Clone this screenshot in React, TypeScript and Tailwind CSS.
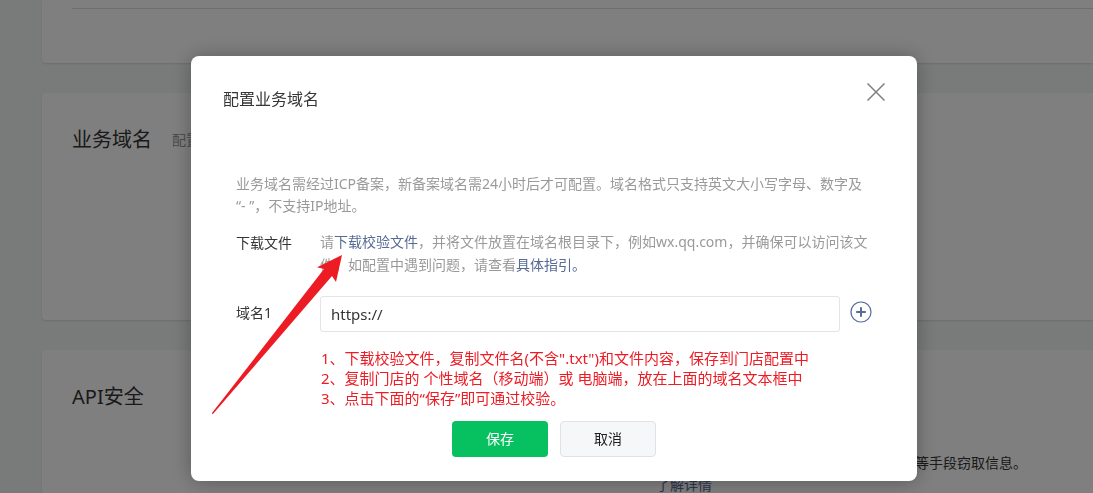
import { useState } from "react";

function Card({ children, className }: { children?: React.ReactNode; className: string }) {
  return (
    <section className={`bg-white pl-[30px] shadow-[0_1px_2px_rgba(0,0,0,0.12)] ${className}`}>
      {children}
    </section>
  );
}

function SettingsPage() {
  return (
    <div className="flex h-screen flex-col gap-[30px] overflow-hidden bg-[#f3f7f5] pl-[42px]">
      <Card className="h-[63px] shrink-0 rounded-bl pt-[8px]">
        <hr className="border-t border-[#dcdcdc]" />
      </Card>

      <Card className="flex h-[227px] shrink-0 items-start gap-5 rounded-l pt-8">
        <h2 className="text-[20px] leading-[30px] text-[#353535]">业务域名</h2>
        <p className="pt-1 text-sm leading-[22px] text-[#9a9a9a]">配置</p>
      </Card>

      <Card className="shrink-0 rounded-l pt-8">
        <h2 className="text-[20px] leading-[30px] text-[#353535]">API安全</h2>
        <div className="mt-10 pl-[584px] text-sm leading-[22px]">
          <p className="pl-[259px] text-[#353535]">等手段窃取信息。</p>
          <a href="#" className="text-[#576b95]">了解详情</a>
        </div>
      </Card>
    </div>
  );
}

function DomainDialog() {
  const [domain, setDomain] = useState<string>("https://");

  return (
    <div
      role="dialog"
      aria-labelledby="dialog-title"
      className="relative w-[726px] rounded-lg bg-white pb-6 pt-[27px] shadow-[0_1px_20px_rgba(0,0,0,0.3)]"
    >
      <div className="flex items-start justify-between px-8">
        <h3 id="dialog-title" className="mt-1 text-base leading-6 text-[#353535]">配置业务域名</h3>
        <button type="button" aria-label="关闭" className="text-[#808080]">
          <svg width="18" height="18" viewBox="0 0 18 18" fill="none" stroke="currentColor" strokeWidth="1.5">
            <path d="M0.5 0.5L17.5 17.5M17.5 0.5L0.5 17.5" />
          </svg>
        </button>
      </div>

      <div className="mt-[62px] px-[45px] text-sm text-[#9a9a9a]">
        <p className="leading-[22px]">
          业务域名需经过ICP备案，新备案域名需24小时后才可配置。域名格式只支持英文大小写字母、数字及 “- ”，不支持IP地址。
        </p>

        <div className="mt-[13px] flex leading-[23px]">
          <div className="w-[84px] shrink-0 pt-px text-[#353535]">下载文件</div>
          <p className="flex-1">
            请<a href="#" className="text-[#576b95]">下载校验文件</a>
            ，并将文件放置在域名根目录下，例如wx.qq.com，并确保可以访问该文件。如配置中遇到问题，请查看
            <a href="#" className="text-[#576b95]">具体指引。</a>
          </p>
        </div>

        <div className="mt-5 flex items-start">
          <label htmlFor="domain" className="w-[84px] shrink-0 leading-[34px] text-[#353535]">域名1</label>
          <input
            id="domain"
            type="text"
            value={domain}
            onChange={(e) => setDomain(e.target.value)}
            className="h-9 min-w-0 flex-1 rounded-[3px] border border-[#e4e4e8] px-[10px] text-[15px] text-[#353535] outline-none"
          />
          <button type="button" aria-label="添加域名" className="ml-[10px] mt-[5px] text-[#576b95]">
            <svg width="22" height="22" viewBox="0 0 22 22" fill="none" stroke="currentColor">
              <circle cx="11" cy="11" r="10" strokeWidth="1.2" />
              <path d="M11 6.2V15.8M6.2 11H15.8" strokeWidth="2" />
            </svg>
          </button>
        </div>
      </div>

      <div className="mt-4 pl-[130px] text-[15px] leading-5 text-[#ed1c24]">
        <p>1、下载校验文件，复制文件名(不含".txt")和文件内容，保存到门店配置中</p>
        <p>2、复制门店的 个性域名（移动端）或 电脑端，放在上面的域名文本框中</p>
        <p>3、点击下面的“保存”即可通过校验。</p>
      </div>

      <div className="mt-[13px] flex justify-center gap-3 text-sm">
        <button type="button" className="h-9 w-24 rounded bg-[#07c160] text-white">保存</button>
        <button type="button" className="h-9 w-24 rounded border border-[#e0e2e6] bg-[#f6f7f9] text-[#1f1f1f]">
          取消
        </button>
      </div>

      {/* arrow to the download link */}
      <svg
        className="pointer-events-none absolute left-5 top-[198px]"
        width="132"
        height="161"
        viewBox="0 0 132 161"
        fill="#ed1c24"
        aria-hidden="true"
      >
        <path d="M131 1L125 28L121 22L2.2 159.8Q1 160.4 1 159L113 15L106 13.2Z" />
      </svg>
    </div>
  );
}

export default function App() {
  return (
    <main className="font-['Noto_Sans','Noto_Sans_CJK_SC',sans-serif]">
      <SettingsPage />
      <div className="fixed inset-0 flex items-start justify-center overflow-hidden bg-black/50 pl-[15px] pt-14">
        <DomainDialog />
      </div>
    </main>
  );
}
